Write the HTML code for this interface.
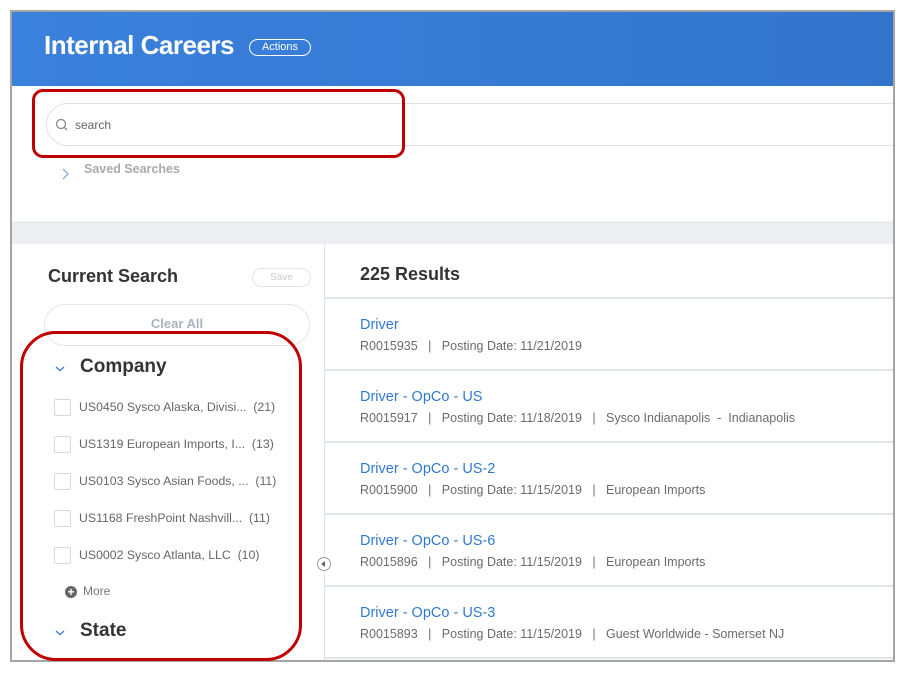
<!DOCTYPE html>
<html><head><meta charset="utf-8"><style>
*{margin:0;padding:0;box-sizing:border-box}
body{width:908px;height:674px;background:#fff;font-family:"Liberation Sans",sans-serif;position:relative;overflow:hidden}
.a{position:absolute}
.frame{left:10px;top:10px;width:885px;height:652px;border:2px solid #a5a5a5;overflow:hidden;background:#fff}
.hdr{left:0;top:0;width:883px;height:74px;background:linear-gradient(90deg,#3a81dc,#3375cd)}
.row{left:313px;width:570px;height:72px;border-top:2px solid #e2e6ea}
.row .ti{position:absolute;left:35px;top:18px;font-size:14.5px;color:#2f7ad0}
.row .m{position:absolute;left:35px;top:40px;font-size:12.5px;color:#6b6b6b;white-space:pre}
.cb{left:42px;width:17px;height:17px;border:1.5px solid #d6d9dc;border-radius:2px}
.it{left:67px;font-size:12.3px;color:#666;white-space:pre}
</style></head><body>
<div class="a frame">
 <div class="a hdr"></div>
 <div class="a" style="left:32px;top:18px;font-size:26px;color:#fff;font-weight:bold;letter-spacing:-0.5px">Internal Careers</div>
 <div class="a" style="left:237px;top:27px;width:62px;height:17px;border:1.5px solid #fff;border-radius:9px;color:#fff;font-size:11px;text-align:center;line-height:14px">Actions</div>
 <div class="a" style="left:34px;top:91px;width:870px;height:43px;border:1px solid #dde2e6;border-radius:22px"></div>
 <svg class="a" style="left:43px;top:106px" width="14" height="14" viewBox="0 0 14 14"><circle cx="6" cy="6" r="4.5" fill="none" stroke="#888" stroke-width="1.3"/><path d="M9.3 9.3L12 12" stroke="#888" stroke-width="1.3"/></svg>
 <div class="a" style="left:63px;top:106px;font-size:12px;color:#666">search</div>
 <svg class="a" style="left:49px;top:155px" width="10" height="14"><path d="M2 2l5 5-5 5" fill="none" stroke="#7aa6e0" stroke-width="1.2"/></svg>
 <div class="a" style="left:72px;top:150px;font-size:12.5px;color:#aaa;font-weight:bold">Saved Searches</div>
 <div class="a" style="left:0;top:209px;width:883px;height:23px;background:#eceff1"></div>
 <div class="a" style="left:312px;top:232px;width:1px;height:420px;background:#e0e3e6"></div>
 <div class="a" style="left:36px;top:254px;font-size:18px;font-weight:bold;color:#333">Current Search</div>
 <div class="a" style="left:240px;top:256px;width:59px;height:19px;border:1px solid #e3e6e9;border-radius:10px;font-size:10px;color:#ccc;text-align:center;line-height:17px">Save</div>
 <div class="a" style="left:32px;top:292px;width:266px;height:42px;border:1.5px solid #e3e6e9;border-radius:21px;font-size:13px;color:#a9b3bc;font-weight:bold;text-align:center;line-height:38px">Clear All</div>
 <svg class="a" style="left:43px;top:353px" width="10" height="8"><path d="M1 2l4 3.5 4-3.5" fill="none" stroke="#3a7fd5" stroke-width="1.3"/></svg>
 <div class="a" style="left:68px;top:344px;font-size:19px;font-weight:bold;color:#333">Company</div>
 <div class="a cb" style="top:387px"></div><div class="a it" style="top:388px">US0450 Sysco Alaska, Divisi...  (21)</div>
 <div class="a cb" style="top:424px"></div><div class="a it" style="top:425px">US1319 European Imports, I...  (13)</div>
 <div class="a cb" style="top:461px"></div><div class="a it" style="top:462px">US0103 Sysco Asian Foods, ...  (11)</div>
 <div class="a cb" style="top:498px"></div><div class="a it" style="top:499px">US1168 FreshPoint Nashvill...  (11)</div>
 <div class="a cb" style="top:535px"></div><div class="a it" style="top:536px">US0002 Sysco Atlanta, LLC  (10)</div>
 <div class="a" style="left:53px;top:574px;width:12px;height:12px;border-radius:50%;background:#666;color:#fff;font-size:12px;line-height:12px;text-align:center;font-weight:bold">+</div>
 <div class="a" style="left:71px;top:572px;font-size:12px;color:#777">More</div>
 <svg class="a" style="left:43px;top:617px" width="10" height="8"><path d="M1 2l4 3.5 4-3.5" fill="none" stroke="#3a7fd5" stroke-width="1.3"/></svg>
 <div class="a" style="left:68px;top:608px;font-size:19px;font-weight:bold;color:#333">State</div>
 <div class="a" style="left:305px;top:545px;width:14px;height:14px;border:1.5px solid #999;border-radius:50%;background:#fff"></div>
 <div class="a" style="left:309px;top:549px;width:0;height:0;border-top:3px solid transparent;border-bottom:3px solid transparent;border-right:4px solid #666"></div>
 <div class="a" style="left:348px;top:252px;font-size:18px;font-weight:bold;color:#333">225 Results</div>
 <div class="a row" style="top:285px"><div class="ti">Driver</div><div class="m">R0015935   |   Posting Date: 11/21/2019</div></div>
 <div class="a row" style="top:357px"><div class="ti">Driver - OpCo - US</div><div class="m">R0015917   |   Posting Date: 11/18/2019   |   Sysco Indianapolis  -  Indianapolis</div></div>
 <div class="a row" style="top:429px"><div class="ti">Driver - OpCo - US-2</div><div class="m">R0015900   |   Posting Date: 11/15/2019   |   European Imports</div></div>
 <div class="a row" style="top:501px"><div class="ti">Driver - OpCo - US-6</div><div class="m">R0015896   |   Posting Date: 11/15/2019   |   European Imports</div></div>
 <div class="a row" style="top:573px"><div class="ti">Driver - OpCo - US-3</div><div class="m">R0015893   |   Posting Date: 11/15/2019   |   Guest Worldwide - Somerset NJ</div></div>
 <div class="a" style="left:313px;top:645px;width:570px;height:2px;background:#e2e6ea"></div>
</div>
<div class="a" style="left:32px;top:89px;width:373px;height:69px;border:3px solid #c00000;border-radius:11px"></div>
<div class="a" style="left:20px;top:331px;width:282px;height:330px;border:3px solid #c00000;border-radius:36px"></div>
</body></html>
